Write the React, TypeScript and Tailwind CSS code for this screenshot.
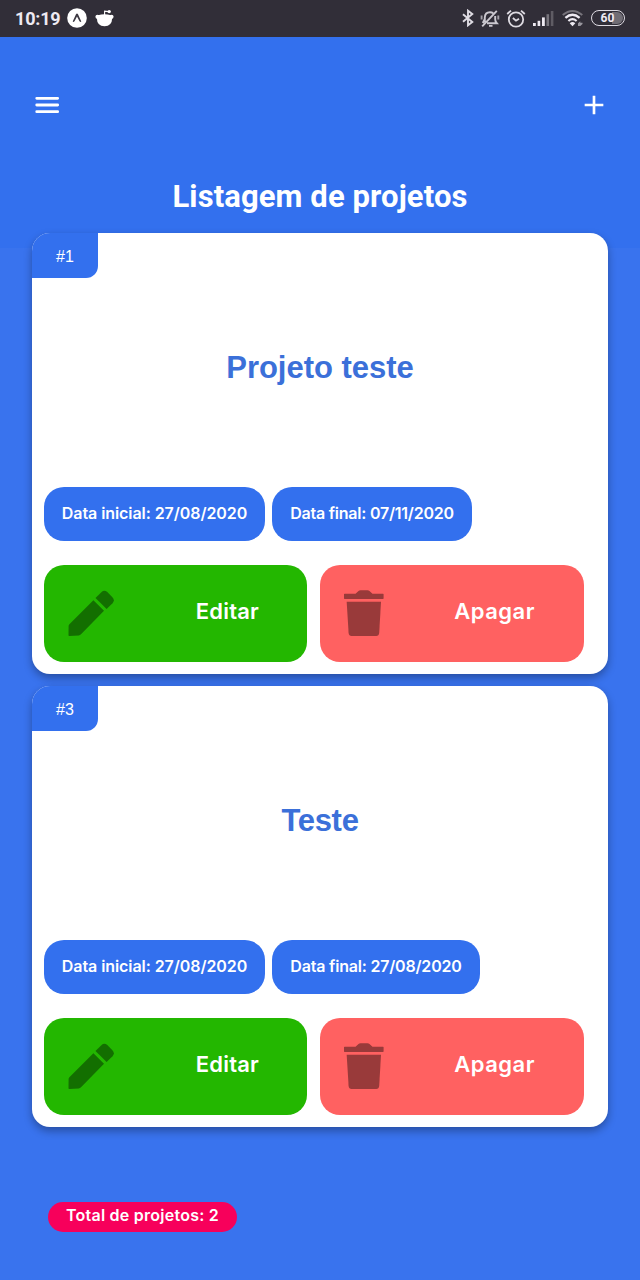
import React from "react";

type Project = { id: number; name: string; start: string; end: string; endClass: string };

const projects: Project[] = [
  { id: 1, name: "Projeto teste", start: "27/08/2020", end: "07/11/2020", endClass: "w-[200px] tracking-[-0.23px]" },
  { id: 3, name: "Teste", start: "27/08/2020", end: "27/08/2020", endClass: "w-[208px] tracking-[-0.2px]" },
];

function StatusBar() {
  return (
    <div className="flex h-[36.5px] shrink-0 items-center justify-between bg-[#312e38] pr-[15px] pl-[15px] text-[#eeeaf2]">
      <div className="flex items-center">
        <span className="w-[46px] pt-px font-[Roboto] text-[18px] leading-none font-bold tracking-[-0.2px] whitespace-nowrap">10:19</span>
        <svg className="ml-[6px]" width="20" height="20" viewBox="0 0 20 20">
          <circle cx="10" cy="10" r="9.8" fill="#fff" />
          <path d="M5.7 13.6 L9 6.3 Q10 4.6 11 6.3 L14.3 13.6 Q13.4 14.5 12.5 13.2 L10 8.6 L7.5 13.2 Q6.6 14.5 5.7 13.6Z" fill="#3b3841" />
        </svg>
        <svg className="ml-2" width="19" height="18" viewBox="0 0 19 18">
          <path d="M1.8 9 H17.2 Q17 17.2 9.5 17.2 Q2 17.2 1.8 9Z" fill="#fff" />
          <path d="M3 6.2 Q9.5 4.4 16 6.2 L17.2 10 H1.8Z" fill="#fff" />
          <circle cx="2.5" cy="7.8" r="2.1" fill="#fff" />
          <circle cx="16.5" cy="7.8" r="2.1" fill="#fff" />
          <path d="M9.6 6 V2.1 L13.4 2.6" fill="none" stroke="#fff" strokeWidth="1.1" />
          <circle cx="14.2" cy="2.6" r="1.7" fill="#fff" />
        </svg>
      </div>
      <div className="flex items-center">
        <svg width="12" height="18" viewBox="0 0 12 18" fill="none" stroke="#dedbe2" strokeWidth="1.9">
          <path d="M1 5.2 L10.3 12.9 L6 16.3 V1.7 L10.3 5.1 L1 12.8" />
        </svg>
        <svg className="ml-[6px]" width="20" height="19" viewBox="0 0 20 19" fill="none" stroke="#cbc8cf" strokeWidth="1.9">
          <path d="M4.8 13.5 V8.5 Q5 3.3 10 3.3 Q12 3.3 13.2 4.3 M7 14.2 H16.8 Q15.2 12.5 15.2 10.5 V7 M4.8 10 L2.8 14 M2.2 17.4 L16.8 1.8 M9 16.9 H12.5" />
          <path d="M1.6 6.5 V10.5 M18.3 6.5 V10.5" stroke="#a3a0a8" />
        </svg>
        <svg className="ml-[6px]" width="20" height="19" viewBox="0 0 20 19" fill="none" stroke="#dedbe2" strokeWidth="1.8">
          <circle cx="10" cy="10.5" r="7.2" />
          <path d="M1.2 5 L5 1.6 M15 1.6 L18.8 5 M6.9 9 L10 11.7 L13 9.7" />
        </svg>
        <svg className="ml-[7px]" width="21" height="17" viewBox="0 0 21 17" fill="#eeeaf2">
          <rect x="0" y="13" width="2.8" height="3" />
          <rect x="4.6" y="10.8" width="2.6" height="5.2" />
          <rect x="9" y="7.4" width="2.8" height="8.6" />
          <rect x="13.5" y="4.2" width="2.6" height="11.8" fill="#77747c" />
          <rect x="17.8" y="1" width="2.6" height="15" fill="#5f5c64" />
        </svg>
        <svg className="ml-[8px]" width="22" height="18" viewBox="0 0 22 18" fill="none">
          <path d="M.7 6 Q10.5 -2.2 20.3 6" stroke="#77747c" strokeWidth="1.9" />
          <path d="M3.4 8.9 Q10.5 2.7 17.6 8.9" stroke="#eeeaf2" strokeWidth="2.3" />
          <path d="M6.4 12 Q10.5 8.4 14.6 12" stroke="#eeeaf2" strokeWidth="2.2" />
          <path d="M7.7 14.2 Q10.5 12 13.3 14.2 L10.5 17.2Z" fill="#eeeaf2" />
          <path d="M16 17 V14.3 L18.3 12.3 V13.8 H20.5 V15 L18.3 17Z" fill="#99969e" />
        </svg>
        <div className="ml-[7px] flex h-[16px] w-[34px] items-center justify-center rounded-full border-[1.6px] border-[#dedbe2] p-px">
          <span className="flex h-full w-full items-center justify-center rounded-full bg-linear-to-r from-[#312e38] from-65% to-[#706d75] to-65% pr-[1px] font-[Roboto] text-[12px] leading-none font-bold">60</span>
        </div>
      </div>
    </div>
  );
}

function PencilIcon() {
  return (
    <svg width="48" height="48" viewBox="0 0 48 48" fill="#136f00">
      <path d="M1.1 45.9 Q.5 45.9 .5 45.3 L.6 35.9 Q.7 35 1.4 34.3 L25.4 10.2 L36 20.8 L13 44.3 Q12.1 45.3 10.8 45.4Z" />
      <path d="M27.5 7.9 L33.6 1.9 Q36.4 -.4 39.3 2.1 L44.4 7.3 Q47.2 10.3 44.5 13.2 L38.6 19Z" />
    </svg>
  );
}

function TrashIcon() {
  return (
    <svg width="40" height="48" viewBox="0 0 40 48" fill="#993a3a">
      <path d="M.6 3.7 H11.5 L14.5 .9 Q15.3 .3 16.5 .3 H23.5 Q24.7 .3 25.5 .9 L28.5 3.7 H39 Q39.6 3.7 39.6 4.3 V8.3 Q39.6 8.9 39 8.9 H.6 Q0 8.9 0 8.3 V4.3 Q0 3.7 .6 3.7Z" />
      <path d="M2.7 11.8 H37 L35.2 43.1 Q34.9 46 32.2 46 H7.6 Q4.9 46 4.6 43.1Z" />
    </svg>
  );
}

function ProjectCard({ project }: { project: Project }) {
  return (
    <article className="flex h-[441px] flex-col overflow-hidden rounded-[18px] bg-white shadow-[0_4px_8px_rgba(0,0,0,0.32)]">
      <div className="flex h-[45px] w-[66px] items-center justify-center rounded-br-[12px] bg-[#3370ee] pt-[2px] font-['Liberation_Sans'] text-[16px] text-white">
        #{project.id}
      </div>
      <h2 className={`flex h-[209px] items-center justify-center pb-[28px] font-['Liberation_Sans'] text-[31px] font-bold text-[#3b70d9] ${project.id === 1 ? "tracking-[-0.02px]" : "tracking-[-0.3px]"}`}>
        {project.name}
      </h2>
      <div className="flex gap-[7px] pl-3 font-[Inter] text-[16px] font-semibold whitespace-nowrap text-white">
        <span className="flex h-[54px] w-[221px] justify-center rounded-[20px] bg-[#3370ee] pt-[13px] leading-[26px] tracking-[-0.07px]">
          Data inicial: {project.start}
        </span>
        <span className={`flex h-[54px] justify-center rounded-[20px] bg-[#3370ee] pt-[13px] leading-[26px] ${project.endClass}`}>
          Data final: {project.end}
        </span>
      </div>
      <div className="mt-6 flex gap-[13px] pl-3 font-[Inter] text-[22px] font-semibold text-white">
        <button className="flex h-[97px] w-[263px] items-center justify-between rounded-[20px] bg-[#23b700] pr-12 pl-6">
          <PencilIcon />
          <span className="pb-[5px] tracking-[0.2px]">Editar</span>
        </button>
        <button className="flex h-[97px] w-[264px] items-center justify-between rounded-[20px] bg-[#ff6161] pr-[49px] pl-6">
          <TrashIcon />
          <span className="pb-[5px] tracking-[0.5px]">Apagar</span>
        </button>
      </div>
    </article>
  );
}

export default function App() {
  return (
    <div className="flex h-[1280px] w-[640px] flex-col overflow-hidden bg-linear-to-b from-[#3370ee] from-[248px] to-[#3973ee] to-[248px]">
      <StatusBar />
      <header className="flex h-[137px] items-center justify-between pr-[30px] pl-[31px]">
        <svg width="32" height="32" viewBox="0 0 24 24" fill="none" stroke="#fff" strokeWidth="2.1" strokeLinecap="round">
          <path d="M4.3 7H20M4.3 12H20M4.3 17H20" />
        </svg>
        <svg width="32" height="32" viewBox="0 0 24 24" fill="#fff">
          <path d="M19 13h-6v6h-2v-6H5v-2h6V5h2v6h6v2z" />
        </svg>
      </header>
      <h1 className="flex h-[59.5px] items-center justify-center pb-[14px] font-[Roboto] text-[31px] leading-none font-bold tracking-[0.1px] text-white">
        Listagem de projetos
      </h1>
      <main className="flex flex-col gap-3 px-8">
        {projects.map((project) => (
          <ProjectCard key={project.id} project={project} />
        ))}
      </main>
      <div className="mt-[75px] ml-12 flex h-[30px] w-[189px] items-center justify-center rounded-full bg-[#f7005b] pb-[5px] font-[Inter] text-[16px] font-semibold tracking-[0.25px] whitespace-nowrap text-white">
        Total de projetos: 2
      </div>
    </div>
  );
}
